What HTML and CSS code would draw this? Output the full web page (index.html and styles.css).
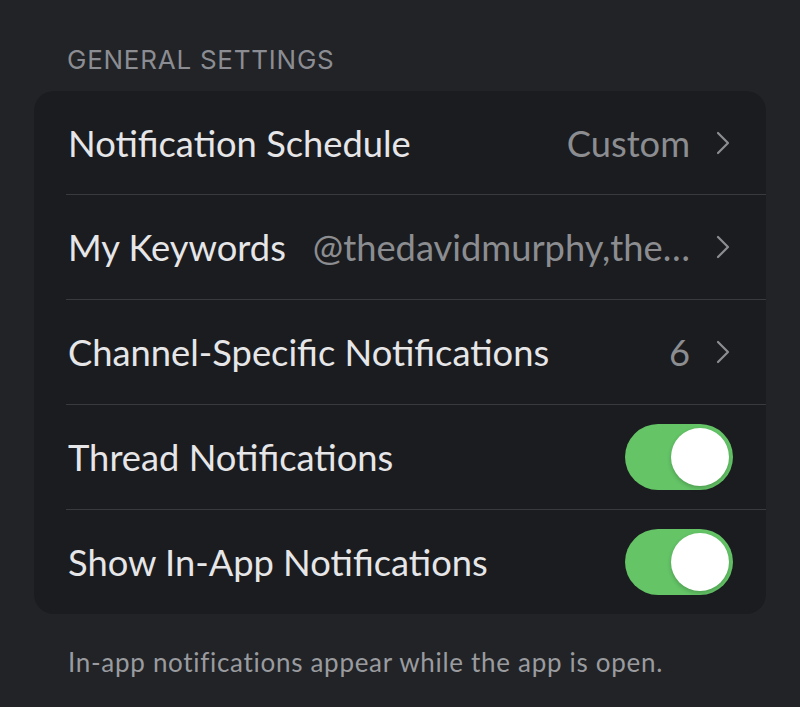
FILE: index.html
```html
<!DOCTYPE html>
<html lang="en">
<head>
    <meta charset="UTF-8">
    <meta name="viewport" content="width=device-width, initial-scale=1.0">
    <title>Notification Settings</title>
    <link rel="stylesheet" href="styles.css">
</head>
<body>

    <div class="section-title">GENERAL SETTINGS</div>

    <div class="card">
        <div class="row">
            <span class="label">Notification Schedule</span>
            <span class="value">Custom</span>
            <svg class="chevron" viewBox="0 0 14 24"><path d="M2 2 L12 12 L2 22"/></svg>
        </div>
        <div class="row">
            <span class="label">My Keywords</span>
            <span class="value">@thedavidmurphy,the…</span>
            <svg class="chevron" viewBox="0 0 14 24"><path d="M2 2 L12 12 L2 22"/></svg>
        </div>
        <div class="row">
            <span class="label">Channel-Specific Notifications</span>
            <span class="value">6</span>
            <svg class="chevron" viewBox="0 0 14 24"><path d="M2 2 L12 12 L2 22"/></svg>
        </div>
        <div class="row">
            <span class="label">Thread Notifications</span>
            <div class="toggle on"><div class="knob"></div></div>
        </div>
        <div class="row">
            <span class="label">Show In-App Notifications</span>
            <div class="toggle on"><div class="knob"></div></div>
        </div>
    </div>

    <p class="footnote">In-app notifications appear while the app is open.</p>

</body>
</html>
```

FILE: styles.css
```css
/* settings screen, dark theme */
body {
    margin: 0;
    padding: 0;
    background-color: #212327;
    font-family: Lato, "Open Sans", sans-serif;
    color: #e6e6e8;
}
.section-title {
    font-family: Inter, "Noto Sans", sans-serif;
    font-size: 26px;
    color: #8b8d92;
    letter-spacing: 0.75px;
    padding: 44px 0 0 67px;
    height: 47px;
}
.card {
    margin: 0 34px;
    background-color: #1b1c1f;
    border-radius: 20px;
    overflow: hidden;
}
.row {
    display: flex;
    align-items: center;
    height: 104px;
    margin-left: 32px;
    padding-right: 36px;
    border-top: 1px solid #393a3e;
}
.row:first-child {
    border-top: none;
    height: 103px;
}
.label {
    font-size: 36.3px;
    padding-left: 2px;
    white-space: nowrap;
    flex-shrink: 0;
}
.value {
    margin-left: auto;
    padding-left: 26px;
    font-size: 36.3px;
    color: #8c8d91;
    white-space: nowrap;
}
.chevron {
    width: 14px;
    height: 24px;
    margin-left: 26px;
    flex-shrink: 0;
}
.chevron path {
    fill: none;
    stroke: #8c8d91;
    stroke-width: 2.2;
    stroke-linecap: round;
    stroke-linejoin: round;
}
.toggle {
    margin-left: auto;
    margin-right: -3px;
    width: 108px;
    height: 66px;
    border-radius: 33px;
    background-color: #3a3b3f;
    position: relative;
    flex-shrink: 0;
}
.toggle.on {
    background-color: #64c466;
}
.knob {
    position: absolute;
    top: 4px;
    left: 4px;
    width: 58px;
    height: 58px;
    border-radius: 50%;
    background-color: #fff;
    box-shadow: 0 2px 4px rgba(0, 0, 0, 0.2);
}
.toggle.on .knob {
    left: 46px;
}
.footnote {
    margin: 32px 0 0 68px;
    font-size: 26px;
    color: #9a9b9f;
    letter-spacing: 0.7px;
}
```
